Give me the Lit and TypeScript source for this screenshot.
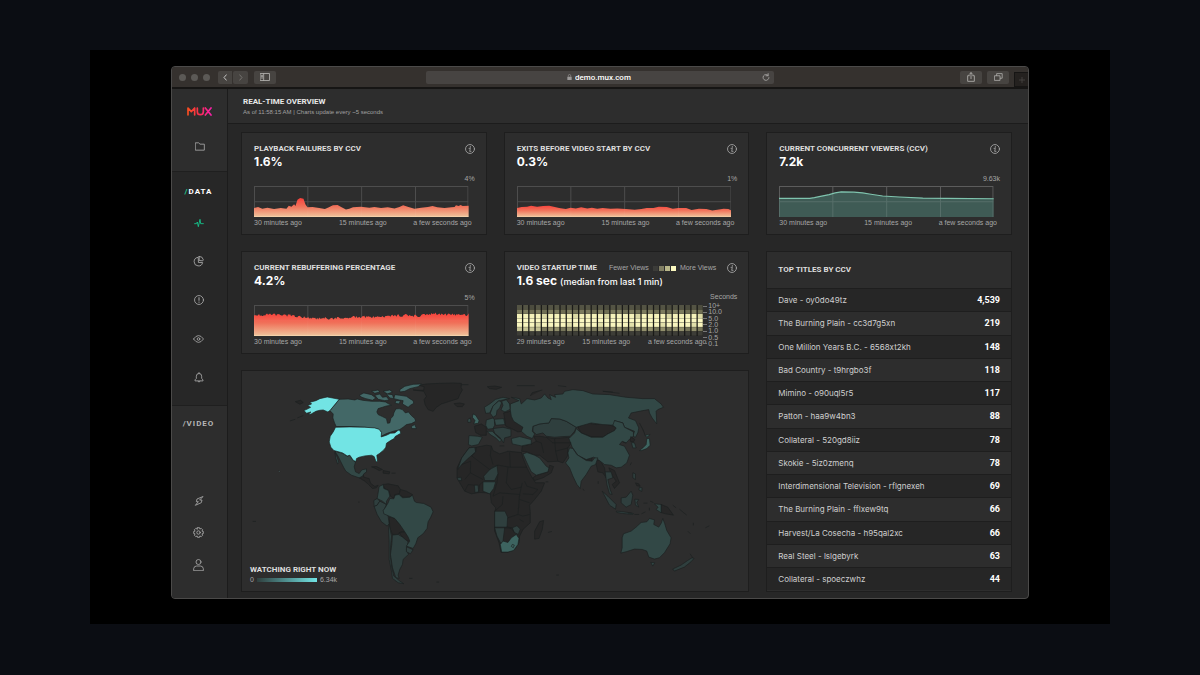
import { LitElement, html, svg, css } from "lit";
import { customElement, property } from "lit/decorators.js";

/* ---------- data ---------- */

const titles: [string, string][] = [
  ["Dave - oy0do49tz", "4,539"],
  ["The Burning Plain - cc3d7g5xn", "219"],
  ["One Million Years B.C. - 6568xt2kh", "148"],
  ["Bad Country - t9hrgbo3f", "118"],
  ["Mimino - o90uql5r5", "117"],
  ["Patton - haa9w4bn3", "88"],
  ["Collateral - 520gd8iiz", "78"],
  ["Skokie - 5iz0zmenq", "78"],
  ["Interdimensional Television - rflgnexeh", "69"],
  ["The Burning Plain - fflxew9tq", "66"],
  ["Harvest/La Cosecha - h95qal2xc", "66"],
  ["Real Steel - lslgebyrk", "63"],
  ["Collateral - spoeczwhz", "44"],
];

/* Chart heights are in a 642 x 90 space, measured from the top. */
const failures =
  "0,64 12,61 25,66 40,63 60,67 80,64 97,66 104,57 112,60 120,53 124,58 130,40 138,35 148,37 154,54 160,62 175,61 195,64 212,67 224,62 236,56 250,55 262,62 275,68 285,66 296,62 320,60 345,63 360,61 380,64 400,62 420,65 435,61 446,56 462,61 480,66 500,63 520,61 534,58 548,62 570,64 590,62 600,61 604,56 612,58 618,55 624,58 642,57";
const exits =
  "0,64 14,61 30,60 42,57 60,60 78,58 96,57 110,60 126,64 146,67 160,63 176,65 192,62 210,65 224,63 240,66 256,64 280,66 300,65 326,67 352,69 372,67 388,64 408,64 424,60 448,61 466,66 482,64 506,64 522,70 544,66 566,67 584,71 604,68 618,66 632,67 642,71";
const viewers =
  "0,36 92,36 106,34 120,31 150,25 168,20 186,17 224,18 250,20 275,24 310,29 360,32 430,35 500,36 642,37";

function rebuffering(): string {
  const base: [number, number][] = [
    [0, 30], [40, 28], [110, 31], [150, 36], [230, 40], [290, 36], [380, 33], [450, 30], [500, 31], [530, 26], [600, 28], [642, 28],
  ];
  const points: string[] = [];
  let seed = 17;
  for (let x = 0; x <= 642; x += 3) {
    let i = 0;
    while (i < base.length - 2 && base[i + 1][0] < x) i++;
    const [x0, y0] = base[i];
    const [x1, y1] = base[i + 1];
    const y = y0 + ((y1 - y0) * (x - x0)) / (x1 - x0);
    seed = (seed * 1103 + 12345) % 65536;
    points.push(`${x},${Math.round(y + (seed / 65536) * 8 - 4)}`);
  }
  return points.join(" ");
}

/* ---------- icons ---------- */

const icon = (box: string, body: unknown, w = 10, h = 10) =>
  html`<svg class="icon" viewBox=${box} width=${w} height=${h} aria-hidden="true">${body}</svg>`;

const icons = {
  info: icon("0 0 30 30", svg`<circle cx="15" cy="15" r="13.4"/><path d="M12 13h4l-2 9h4M16 7.5v2.5"/>`),
  folder: icon("0 0 30 26", svg`<path d="M2 2h9l4 4h13v18H2z"/>`, 10, 9),
  pulse: icon("0 0 30 30", svg`<path d="M2 17h5l3-5 3 14 5-22 2 13h8"/>`),
  pie: icon("0 0 32 32", svg`<path d="M14 4A12.500 12.500 0 1 0 28 19H17z"/><path d="M18 1v12l9 1q3 0 3-3A12 12 0 0 0 18 1z"/>`, 11, 11),
  alert: icon("0 0 30 30", svg`<circle cx="15" cy="15" r="13.4"/><path d="M15 8v8M15 21v1" stroke-width="3"/>`),
  eye: icon("0 0 32 24", svg`<path d="M1 12Q16-9 31 12Q16 33 1 12z"/><circle cx="16" cy="12" r="4"/>`, 11, 8),
  bell: icon("0 0 30 32", svg`<path d="M3 25V23l4-4v-7a8 8 0 0 1 16 0v7l4 4v2zM12 28q3 4 6 0M15 4V1"/>`, 10, 11),
  bolt: icon("0 0 30 30", svg`<path d="M26 2L9 9L7 17h6L4 28L22 20l2-8h-6z"/>`),
  gear: icon("0 0 32 32", svg`<path d="M13 2h6l1 4 4-2 4 4-2 4 4 1v6l-4 1 2 4-4 4-4-2-1 4h-6l-1-4-4 2-4-4 2-4-4-1v-6l4-1-2-4 4-4 4 2z"/><circle cx="16" cy="16" r="5"/>`, 11, 11),
  user: icon("0 0 32 36", svg`<circle cx="16" cy="9" r="7.500"/><path d="M1.500 34v-5q1-8 9-8h11q8 0 9 8v5z"/>`, 11, 12),
  back: icon("0 0 12 20", svg`<path d="M10 2L3 10l7 8"/>`, 4, 7),
  forward: icon("0 0 12 20", svg`<path d="M2 2l7 8-7 8"/>`, 4, 7),
  panel: icon("0 0 30 24", svg`<path d="M1.500 1.500h27v21h-27zM11 2v20M4 7h4M4 11h4M4 15h4"/>`, 10, 8),
  reload: icon("0 0 24 26", svg`<path d="M19 8A9.500 9.500 0 1 0 21.500 15M19 2v7h-7"/>`, 8, 8),
  share: icon("0 0 24 30", svg`<path d="M7 11H2v17h20V11h-5M12 20V2M7 7l5-5 5 5"/>`, 8, 10),
  tabs: icon("0 0 28 26", svg`<path d="M2 9h17v15H2zM8 8V2h18v15h-6"/>`, 9, 8),
  plus: icon("0 0 20 20", svg`<path d="M10 1v18M1 10h18"/>`, 6, 6),
  lock: html`<svg width="5" height="6" viewBox="0 0 15 18" aria-hidden="true"><path d="M1 8h13v10H1z" fill="#9b9998"/><path d="M4 8V5a3.500 3.500 0 0 1 7 0v3" fill="none" stroke="#9b9998" stroke-width="2"/></svg>`,
};

const iconStyles = css`
  * { box-sizing: border-box; }
  .icon { display: block; fill: none; stroke: currentColor; stroke-width: 2.5; stroke-linejoin: round; stroke-linecap: round; }
  button { display: grid; place-items: center; margin: 0; padding: 0; border: 0; background: none; color: #a9a9a9; font: inherit; }
  h2 { margin: 0; font: 700 8px/10px Roboto, sans-serif; color: #dedede; white-space: nowrap; }
`;

/* ---------- metric card ---------- */

@customElement("metric-card")
class MetricCard extends LitElement {
  @property() heading = "";
  @property() value = "";
  @property() max = "";
  @property() points = "";
  @property() tone = "hot";
  @property({ type: Number }) peak = 30;

  static styles = [
    iconStyles,
    css`
      :host { display: block; padding: 11px 11px 6px 12px; background: #2d2d2d; border: 1px solid #1e1e1e; }
      .top { display: flex; justify-content: space-between; }
      .top button { width: 10px; height: 10px; }
      .value { margin: 1px 0 0; font: 700 12px/14px Inter, sans-serif; color: #fff; }
      .max { margin: 6px 0 3px; text-align: right; line-height: 8px; }
      .plot { padding-right: 6px; }
      .plot svg { display: block; width: 100%; height: 31px; }
      .axis { display: grid; grid-template-columns: 1fr auto 1fr; margin: 1px 3px 0 0; line-height: 10px; }
      .axis span:last-child { text-align: right; }
    `,
  ];

  render() {
    const area = `0,90 ${this.points} 642,90`;
    const hot = this.tone === "hot";
    return html`
      <div class="top">
        <h2>${this.heading}</h2>
        <button aria-label="About this metric">${icons.info}</button>
      </div>
      <p class="value">${this.value}</p>
      <p class="max">${this.max}</p>
      <div class="plot">
        <svg viewBox="0 0 642 90" preserveAspectRatio="none" role="img" aria-label=${this.heading}>
          <defs>
            <linearGradient id="g" gradientUnits="userSpaceOnUse" x1="0" x2="0" y1=${this.peak} y2="90">
              <stop offset="0" stop-color="#f8403a" />
              <stop offset="0.45" stop-color="#f0745c" />
              <stop offset="0.93" stop-color="#efba94" />
              <stop offset="1" stop-color="#f6dcb4" />
            </linearGradient>
            <clipPath id="sky"><polygon points=${`0,0 ${this.points} 642,0`} /></clipPath>
          </defs>
          ${hot ? svg`<polygon points=${area} fill="url(#g)" />` : svg`<polygon points=${area} fill="#3f5b55" />`}
          <path
            d="M1.500 90V1.500H640V90M161 0V90M322 0V90M483 0V90M0 46H642"
            fill="none" stroke="#fff" stroke-opacity=${hot ? "0.04" : "0.12"} stroke-width="3" />
          <path
            d="M1.500 90V1.500H640V90M161 0V90M322 0V90M483 0V90M0 46H642"
            fill="none" stroke="#fff" stroke-opacity="0.12" stroke-width="3"
            clip-path="url(#sky)" />
          ${hot ? "" : svg`<polyline points=${this.points} fill="none" stroke="#7fc4ae" stroke-width="3.500" />`}
        </svg>
      </div>
      <div class="axis"><span>30 minutes ago</span><span>15 minutes ago</span><span>a few seconds ago</span></div>
    `;
  }
}

/* ---------- startup time heat map ---------- */

@customElement("startup-card")
class StartupCard extends LitElement {
  static styles = [
    iconStyles,
    css`
      :host { display: block; padding: 11px 11px 6px 12px; background: #2d2d2d; border: 1px solid #1e1e1e; }
      .top { display: flex; align-items: center; }
      .top button { width: 10px; height: 10px; }
      .legend { flex: 1; display: flex; justify-content: flex-end; align-items: center; gap: 4px; margin-right: 11px; line-height: 10px; white-space: nowrap; }
      .swatches { display: flex; gap: 1px; }
      .swatch { width: 5px; height: 5px; }
      .s0 { background: #3c3c39; }
      .s1 { background: #807e63; }
      .s2 { background: #b9b78a; }
      .s3 { background: #fbf8bf; }
      .value { display: flex; align-items: baseline; gap: 3px; height: 14px; margin: 1px 0 0; font: 700 12px/14px Inter, sans-serif; color: #fff; }
      .value small { font-size: 9px; font-weight: 500; }
      .body { display: grid; grid-template-columns: 1fr 34px; margin-top: 5px; }
      .body > div { padding-top: 12px; }
      .heat { display: block; width: 100%; height: 31px; }
      .axis { display: flex; justify-content: space-between; margin: 1px -3px 0 0; line-height: 10px; white-space: nowrap; }
      .scale { position: relative; }
      .scale ol { display: flex; flex-direction: column; justify-content: space-between; height: 44px; margin: -2px 0 -8px; padding: 0; list-style: none; line-height: 6px; }
      .scale li { display: flex; align-items: center; gap: 1px; }
      .scale li::before { content: ""; width: 4px; height: 1px; background: #777; }
      .unit { position: absolute; top: 0; right: 0; margin: 0; line-height: 8px; }
    `,
  ];

  render() {
    const columns = Array.from({ length: 30 }, (_, i) => i);
    const tones = (c: number) => {
      const lift = (c * 7) % 5;
      return [
        lift > 2 ? "#4c4c3e" : "#545444",
        lift > 2 ? "#6f6e54" : "#7c7b5e",
        lift === 3 ? "#dbd9a4" : "#f5f2ba",
        "#fbf8c2",
        lift === 1 ? "#e2e0aa" : "#f8f5be",
        c < 4 ? "#c3c192" : lift > 2 ? "#77765a" : "#92906c",
        "#3d3d37",
      ];
    };
    return html`
      <div class="top">
        <h2>VIDEO STARTUP TIME</h2>
        <div class="legend">
          <span>Fewer Views</span>
          <span class="swatches">
            <i class="swatch s0"></i><i class="swatch s1"></i><i class="swatch s2"></i><i class="swatch s3"></i>
          </span>
          <span>More Views</span>
        </div>
        <button aria-label="About this metric">${icons.info}</button>
      </div>
      <p class="value">1.6 sec <small>(median from last 1 min)</small></p>
      <div class="body">
        <div>
          <svg class="heat" viewBox="0 0 563 91" preserveAspectRatio="none" role="img" aria-label="Video startup time">
            <rect width="563" height="91" fill="#191917" />
            ${columns.map((c) =>
              tones(c).map(
                (fill, r) => svg`<rect x=${c * 18.8} y=${r * 13} width="15" height="12.300" fill=${fill} />`
              )
            )}
          </svg>
          <div class="axis"><span>29 minutes ago</span><span>15 minutes ago</span><span>a few seconds ago</span></div>
        </div>
        <div class="scale">
          <p class="unit">Seconds</p>
          <ol>
            ${["10+", "10.0", "5.0", "2.0", "1.0", "0.5", "0.1"].map((t) => html`<li>${t}</li>`)}
          </ol>
        </div>
      </div>
    `;
  }
}

/* ---------- world map ---------- */

const americas = {
  us: [
    "M192 128L205 122 212 118 203 113 215 108 210 103 228 98 240 92 262 87 298 94 270 128 264 132 250 126 240 127 228 130 214 138 205 140 213 132 200 136z",
    "M287 178L330 177 375 178 405 180 418 184 425 194 424 207 440 202 452 196 465 195 475 187 480 187 483 196 466 206 463 212 452 218 440 226 438 238 432 246 420 256 411 262 413 280 409 282 403 266 395 262 375 264 358 268 350 272 348 281 340 277 330 262 322 264 308 255 290 250 282 248 273 238 268 222 271 205 280 192z",
  ],
  canada: [
    "M298 94L325 93 345 96 352 93 368 97 395 100 420 100 437 102 445 107 455 112 440 114 428 118 415 122 411 132 415 140 428 146 440 152 443 166 450 165 453 152 460 144 462 135 468 123 478 122 488 125 497 135 506 132 514 142 525 152 528 160 515 167 500 170 490 178 478 186 460 190 440 197 424 205 424 192 415 183 400 181 375 178 330 176 289 176 284 165 279 150 280 138 270 128z",
    "M515 175L525 170 530 182 516 182z",
    "M465 80L480 82 500 85 510 92 520 98 522 106 512 112 505 118 495 112 488 108 490 98 478 96 462 92z",
    "M358 82L372 75 395 80 408 90 398 97 378 92 366 88z",
    "M405 82L420 78 428 88 440 86 448 96 435 98 415 94z",
    "M480 65L495 55 520 49 545 48 535 56 510 62 495 70 480 72z",
    "M395 70L415 66 420 72 405 76z",
    "M430 70L450 66 458 72 443 78z",
    "M440 78L458 80 462 92 450 90z",
    "M468 98L482 98 478 108 466 106z",
  ],
  mid: [
    "M285 250L308 256 322 265 330 263 340 278 347 282 343 297 347 312 358 317 366 306 380 303 380 312 372 318 368 325 358 330 335 322 318 310 312 300 303 282 295 266z",
    "M285 254L292 268 297 284 293 288 288 272z",
    "M418 356L430 350 432 362 446 368 450 385 440 400 440 410 428 400 412 392 415 375z",
    "M445 405L450 392 462 393 466 382 478 380 488 390 510 388 518 382 524 400 530 404 552 407 574 418 580 432 572 450 565 462 562 482 550 498 534 510 528 528 520 542 508 538 500 535 510 520 505 508 495 492 480 470 465 452 448 445 432 438 430 428 436 420z",
  ],
  low: [
    "M402 398L412 392 420 400 412 412 403 416z",
    "M403 416L412 412 420 400 440 410 432 428 445 446 448 468 442 475 425 462 412 440z",
    "M458 502L475 500 488 508 505 522 500 545 506 560 490 575 488 590 480 605 475 622 478 632 468 630 458 600 452 560 456 530z",
    "M448 470L455 505 452 540 452 570 456 600 462 625 480 640 492 648 475 645 458 632 455 610 448 575 448 520 446 480z",
    "M500 537L520 546 512 558 500 552z",
  ],
  none: [
    "M520 66L552 67 553 56 535 52 560 48 600 46 640 45 665 46 664 58 668 66 660 80 655 92 630 100 605 108 590 118 580 130 565 125 556 110 553 95 560 85 552 70z",
    "M643 107L660 105 674 108 668 116 652 116z",
    "M358 330L370 320 372 328 388 332 392 346 405 356 415 352 410 360 398 362 386 350 375 340z",
    "M395 297L410 296 428 305 418 308 403 300z",
    "M430 308L450 312 448 318 430 316z",
    "M430 350L445 348 475 354 482 365 478 378 465 380 462 392 452 385 447 368 434 362z",
    "M482 365L500 370 518 380 510 388 490 388 478 380z",
    "M448 446L465 452 480 470 495 480 496 492 482 492 475 500 458 500 450 480z",
    "M478 495L495 492 512 512 505 522 488 508z",
    "M166 101L182 97 190 104 180 109zM150 159L166 154M172 150L190 143M665 50H686M508 632h10M590 643h8M38 461h10M455 316h12M357 401v4",
  ],
};

const oldWorld = {
  bright: [
    "M100 138L108 142 118 158 116 166 102 168 106 158 98 148z",
    "M182 530L190 520 205 524 215 510 230 500 238 512 235 530 222 548 205 553 186 553zM218 530l6 2-3 8-6-4z",
  ],
  mid: [
    "M134 118L150 108 168 94 190 88 210 92 190 96 175 100 160 115 150 135 138 136z",
    "M152 136L160 114 178 98 186 104 180 120 172 128 170 142 160 148z",
    "M186 100L200 95 210 108 212 124 196 132 184 126 190 112z",
    "M140 156L160 150 164 155 165 172 160 182 144 184 138 172z",
    "M164 154L192 152 196 170 168 172z",
    "M84 155L92 150 94 162 85 164z",
    "M88 203L115 205 128 208 116 230 96 234 86 230z",
    "M142 190L158 190 172 205 186 216 180 222 168 210 152 200z",
    "M215 212L240 206 275 215 275 228 245 234 218 228z",
    "M250 258L262 254 285 262 300 270 320 295 328 300 325 312 290 322 275 312 262 285z",
    "M212 108L238 98 215 88 240 92 245 108 262 92 285 96 305 90 315 78 325 90 335 95 330 80 348 88 345 80 370 78 375 70 400 65 430 68 460 78 510 80 560 88 610 92 645 92 665 108 672 118 655 125 650 130 652 168 638 150 630 135 628 125 610 128 575 135 567 150 588 158 598 180 595 195 588 208 580 205 585 190 555 178 550 165 525 158 525 172 490 170 455 165 420 175 410 178 380 160 360 153 335 152 328 165 300 168 280 175 278 190 285 198 278 212 262 205 245 190 250 178 222 160 215 145 212 125z",
    "M388 212L405 195 410 182 425 195 455 208 490 208 505 198 525 188 530 180 520 172 525 158 550 165 555 178 582 192 582 205 572 212 560 225 548 220 540 230 555 235 570 262 562 285 545 298 530 300 515 292 495 290 480 278 462 268 440 275 415 262 398 238z",
    "M390 240L400 242 412 260 440 278 458 280 465 270 475 270 468 290 455 295 440 320 425 340 422 362 412 350 400 325 390 300 378 285 388 270 385 255z",
    "M130 342L168 342 162 362 150 378 130 370z",
  ],
  low: [
    "M280 175L300 168 328 165 335 152 360 153 380 160 410 178 405 190 392 205 370 206 345 208 320 205 310 195 290 200 280 190z",
    "M160 182L190 178 214 184 214 205 195 210 192 225 180 208 165 196z",
    "M88 240L105 238 108 252 85 272 66 290 54 305 66 270z",
    "M132 325L155 300 172 292 175 318 165 338 135 338z",
    "M104 352L115 352 117 372 106 374z",
    "M165 430L196 430 204 448 202 478 165 478z",
    "M165 480L195 480 190 520 184 528 172 505z",
    "M218 480L232 474 242 484 236 500 224 494z",
    "M497 312L515 312 520 330 505 335 512 365 518 380 510 378 502 350z",
    "M488 370L505 385 530 410 528 424 510 412z",
    "M530 430L545 431 565 434 582 437 580 440 550 437 532 434z",
    "M545 390L560 388 575 370 580 382 575 410 560 418 545 405z",
    "M52 330L64 328 66 338 56 338z",
  ],
  none: [
    "M88 240L110 238 140 232 155 234 160 248 180 258 205 250 246 254 250 270 262 300 275 325 288 345 315 345 305 370 285 395 270 412 272 435 272 465 250 485 240 505 238 525 225 545 205 553 184 553 178 525 165 490 165 440 168 420 155 405 152 378 140 375 120 374 95 378 75 370 60 345 52 330 52 300 66 270z",
    "M285 490L300 462 312 458 308 485 298 512 285 514z",
    "M104 175L125 168 140 178 140 202 122 202 108 194z",
    "M192 135L212 130 220 148 250 175 248 190 235 192 215 182 198 174 195 152z",
    "M275 228L290 220 282 205 300 205 320 208 345 212 390 208 395 225 385 240 385 262 370 285 355 280 325 282 300 262 285 262 262 252 246 250 248 235z",
    "M280 330L290 322 325 312 330 292 342 296 335 315 310 330 285 338z",
    "M415 178L440 165 470 170 490 165 530 178 525 188 505 198 490 208 455 206 425 195z",
    "M468 280L480 275 495 300 500 330 490 315 475 312z",
    "M508 300L525 308 540 345 525 362 518 350 530 340 515 318z",
    "M412 262L440 275 458 272 456 280 436 278z",
    "M143 56L165 54 186 58 170 64 150 62zM232 53H285M272 84L278 74 308 66M355 53L380 56M490 70L520 72M430 363l4 6M325 494l12-3M350 622h8M180 234h14M318 342h8",
  ],
  lines: [
    "M96 264L150 305 175 292 212 298M110 238L108 252 96 264M155 234L152 262 160 290M210 253L212 298H262M93 280L92 315 75 335M92 315L130 335M205 298L200 345 215 365 245 358M175 318L172 345 160 385M160 385L180 375 240 380M190 385L188 410 165 430M240 380L235 440 204 450M248 345L240 380M255 340L262 355 295 365 280 380 250 378M270 405L240 395M235 440L250 445 270 440M202 478L218 480M195 480L215 482 224 494M240 455L252 462M66 290L93 280M75 370L85 350 104 352M117 372L120 350 130 342M312 255L305 225 290 220M345 212L348 250 355 280M348 250L385 240M320 208L340 225 395 225",
  ],
};

const pacific = {
  bright: ["M240 248L250 240 260 230 262 212 270 212 272 232 262 242 246 248z", "M258 202L272 200 262 208z"],
  mid: [
    "M188 510L192 498 215 490 230 478 245 464 262 462 270 452 285 456 283 470 298 478 306 465 310 452 316 468 322 488 335 510 332 528 315 555 300 570 285 574 268 568 262 550 248 545 225 544 200 552 184 556 188 540z",
    "M274 584L286 585 280 595z",
    "M285 408L305 410 305 435 290 425 296 418z",
    "M216 224L225 225 230 240 220 240z",
  ],
  low: [
    "M220 315L228 318 228 335 220 330z",
    "M240 358L248 360 247 371 238 366z",
    "M398 570L404 572 395 582 375 598 345 610 340 604 365 592 385 578z",
    "M226 394L238 395 232 404 238 418 228 412z",
  ],
  none: [
    "M305 410L325 418 342 442 318 438 305 434z",
    "M228 345L238 348 242 355 232 354z",
    "M214 206L226 215 222 222 212 220z",
    "M240 165L252 188 258 205M392 558L400 570M340 412L350 420M360 424L372 434M385 490l8 8M438 480l12-6M402 465v8M205 436h12M225 440h14M246 438l12-6M252 406h12M272 400l10 4M212 292l4-8M116 340v8M130 70l50 6M270 420v8M190 222l10 4M372 434l10 8",
  ],
};

@customElement("world-map")
class WorldMap extends LitElement {
  static styles = [
    iconStyles,
    css`
      :host { position: relative; display: block; background: #2d2d2d; border: 1px solid #1e1e1e; }
      .map { display: block; width: 100%; height: auto; stroke: #1b1f1f; stroke-width: 2; stroke-linejoin: round; }
      .us { fill: #72e4e4; }
      .canada { fill: #436867; }
      .mid { fill: #324846; }
      .low { fill: #2f3f3e; }
      .bright { fill: #3d6460; }
      .none { fill: #262626; }
      .lines { fill: none; }
      .legend { position: absolute; left: 8px; bottom: 6px; }
      .scale { display: flex; align-items: center; gap: 3px; line-height: 10px; }
      .ramp { width: 60px; height: 4px; background: linear-gradient(90deg, #2f3f3e, #72e4e4); }
    `,
  ];

  private shapes(groups: Record<string, string[]>) {
    const order = ["none", "low", "mid", "canada", "bright", "us", "lines"];
    return order
      .filter((k) => groups[k])
      .map((k) => svg`<g class=${k}>${groups[k].map((d) => svg`<path d=${d} />`)}</g>`);
  }

  render() {
    return html`
      <svg class="map" viewBox="6 9 1521 660" role="img" aria-label="Viewers by country">
        <g>${this.shapes(americas)}</g>
        <g transform="translate(600 0)">${this.shapes(oldWorld)}</g>
        <g transform="translate(960 0)">${this.shapes(pacific)}</g>
        <circle cx="118" cy="310" r="1.500" fill="#a5c9c9" />
      </svg>
      <div class="legend">
        <h2>WATCHING RIGHT NOW</h2>
        <div class="scale"><span>0</span><i class="ramp"></i><span>6.34k</span></div>
      </div>
    `;
  }
}

/* ---------- page ---------- */

@customElement("app-root")
class AppRoot extends LitElement {
  static styles = [
    iconStyles,
    css`
      :host { box-sizing: border-box; display: block; min-height: 100vh; padding: 50px 90px; background: #0b0d13; font: 7px/10px "Liberation Sans", Arial, sans-serif; color: #a6a6a6; }
      .frame { padding: 16px 81px 25px; background: #000; }
      .window { overflow: hidden; border: 1px solid #4b4a49; border-radius: 4px; background: #272727; }

      .toolbar { display: grid; grid-template-columns: 127fr 174fr 127fr; align-items: center; height: 22px; background: #35312e; border-bottom: 2px solid #161514; }
      .left, .right { display: flex; align-items: center; }
      .left { padding-left: 7px; }
      .light { width: 7px; height: 7px; margin-right: 5px; border-radius: 50%; background: #5b5956; }
      .toolbar button { width: 22px; height: 13px; border-radius: 2px; background: #474441; color: #b5b3b0; }
      .toolbar .nav { width: 15px; }
      .toolbar .back { width: 14px; margin: 0 1px 0 3px; border-radius: 2px 0 0 2px; color: #dedede; }
      .toolbar .dim { color: #807d7a; }
      .toolbar .panel { margin-left: 6px; }
      .address { display: flex; align-items: center; height: 13px; padding-right: 2px; border-radius: 2px; background: #474442; }
      .toolbar .reload { width: 12px; background: none; }
      .address label { flex: 1; display: flex; justify-content: center; align-items: center; gap: 3px; padding-left: 14px; }
      .address input { width: 58px; height: 13px; padding: 0; border: 0; background: none; color: #fff; font: 500 8px/13px Roboto, Arial, sans-serif; outline: 0; }
      .right { justify-content: flex-end; align-self: stretch; gap: 5px; }
      .toolbar .newtab { align-self: flex-end; width: 14px; height: 15px; border: 1px solid #161514; border-right: 0; border-radius: 0; background: #24211f; color: #4b4846; }

      .layout { display: grid; grid-template-columns: 56px 1fr; }
      .sidebar { display: flex; flex-direction: column; background: #2d2d2d; border-right: 1px solid #1c1c1c; }
      .section { display: flex; flex-direction: column; align-items: center; padding-right: 2px; }
      .brand { height: 82px; padding-top: 18px; padding-right: 0; gap: 22px; }
      .brand a { display: block; }
      .brand svg { display: block; }
      .data { height: 235px; padding-top: 15px; padding-bottom: 20px; gap: 18px; background: #272727; border: 1px solid #1f1f1f; border-width: 1px 0; }
      .video { flex: 1; padding-top: 13px; padding-bottom: 25px; gap: 16px; }
      .name { font: 700 8px/10px Roboto, sans-serif; letter-spacing: 1px; color: #fff; text-decoration: none; }
      .video .name { flex: 1; color: #b5b5b5; }
      .slash { color: #1fce93; }
      .items { flex: 1; display: flex; flex-direction: column; justify-content: space-between; }
      .sidebar button { width: 16px; height: 16px; }
      .sidebar .active { color: #14cf93; }

      .head { height: 35px; padding: 8px 15px 0; background: #2d2d2d; border-bottom: 1px solid #1c1c1c; }
      h1 { margin: 0; font: 700 8px/10px Roboto, sans-serif; color: #e8e8e8; }
      .head p { margin: 0; font-size: 6px; line-height: 10px; color: #a0a0a0; }
      .grid { display: grid; grid-template-columns: repeat(3, minmax(0, 1fr)); grid-template-rows: auto auto 1fr; gap: 16px 17px; padding: 8px 16px 6px 13px; }
      .wide { grid-column: 1 / 3; grid-row: 3; align-self: start; }

      .titles { grid-column: 3; grid-row: 2 / 4; display: flex; flex-direction: column; padding-bottom: 1px; background: #2d2d2d; border: 1px solid #1e1e1e; }
      .titles h2 { padding: 13px 11px; }
      table { flex: 1; width: 100%; border-collapse: collapse; font: 8px/10px Inter, sans-serif; color: #cfcfcf; }
      th, td { padding: 0 11px; border-top: 1px solid #1e1e1e; text-align: left; font-weight: 400; }
      td { text-align: right; font: 700 9px/10px Roboto, sans-serif; color: #fff; }
      tr:nth-child(odd) { background: #262626; }
    `,
  ];

  render() {
    return html`
      <div class="frame">
        <div class="window">
          <div class="toolbar">
            <div class="left">
              <i class="light"></i><i class="light"></i><i class="light"></i>
              <button class="nav back" aria-label="Back">${icons.back}</button>
              <button class="nav dim" aria-label="Forward">${icons.forward}</button>
              <button class="panel" aria-label="Sidebar">${icons.panel}</button>
            </div>
            <div class="address">
              <label>${icons.lock}<input aria-label="Address" value="demo.mux.com" /></label>
              <button class="reload" aria-label="Reload">${icons.reload}</button>
            </div>
            <div class="right">
              <button aria-label="Share">${icons.share}</button>
              <button aria-label="Tabs">${icons.tabs}</button>
              <button class="newtab" aria-label="New tab">${icons.plus}</button>
            </div>
          </div>

          <div class="layout">
            <nav class="sidebar">
              <div class="section brand">
                <a href="#" aria-label="Mux">
                  <svg width="25" height="9" viewBox="0 0 75 27" fill="none" stroke-width="5" stroke-linecap="round" stroke-linejoin="round">
                    <defs>
                      <linearGradient id="mux" gradientUnits="userSpaceOnUse" x1="0" x2="75" y1="0" y2="0">
                        <stop offset="0" stop-color="#fb501d" />
                        <stop offset="0.5" stop-color="#fa2c50" />
                        <stop offset="1" stop-color="#f81fb0" />
                      </linearGradient>
                    </defs>
                    <path stroke="url(#mux)" d="M3 24V3l10 11L23 3v21M31 3v11a9 9 0 0 0 18 0V3M55 3l17 21M72 3L55 24" />
                  </svg>
                </a>
                <button aria-label="Environments">${icons.folder}</button>
              </div>
              <div class="section data">
                <a class="name" href="#data"><span class="slash">/</span>DATA</a>
                <div class="items">
                  <button class="active" aria-label="Real-time">${icons.pulse}</button>
                  <button aria-label="Metrics">${icons.pie}</button>
                  <button aria-label="Errors">${icons.alert}</button>
                  <button aria-label="Views">${icons.eye}</button>
                  <button aria-label="Alerts">${icons.bell}</button>
                </div>
              </div>
              <div class="section video">
                <a class="name" href="#video">/VIDEO</a>
                <button aria-label="Status">${icons.bolt}</button>
                <button aria-label="Settings">${icons.gear}</button>
                <button aria-label="Account">${icons.user}</button>
              </div>
            </nav>

            <main>
              <header class="head">
                <h1>REAL-TIME OVERVIEW</h1>
                <p>As of 11:58:15 AM | Charts update every ~5 seconds</p>
              </header>
              <div class="grid">
                <metric-card heading="PLAYBACK FAILURES BY CCV" value="1.6%" max="4%" .points=${failures} .peak=${36}></metric-card>
                <metric-card heading="EXITS BEFORE VIDEO START BY CCV" value="0.3%" max="1%" .points=${exits} .peak=${56}></metric-card>
                <metric-card heading="CURRENT CONCURRENT VIEWERS (CCV)" value="7.2k" max="9.63k" .points=${viewers} tone="cool"></metric-card>
                <metric-card heading="CURRENT REBUFFERING PERCENTAGE" value="4.2%" max="5%" .points=${rebuffering()} .peak=${24}></metric-card>
                <startup-card></startup-card>
                <section class="titles">
                  <h2>TOP TITLES BY CCV</h2>
                  <table>
                    <tbody>
                      ${titles.map(([name, count]) => html`<tr><th scope="row">${name}</th><td>${count}</td></tr>`)}
                    </tbody>
                  </table>
                </section>
                <world-map class="wide"></world-map>
              </div>
            </main>
          </div>
        </div>
      </div>
    `;
  }
}
